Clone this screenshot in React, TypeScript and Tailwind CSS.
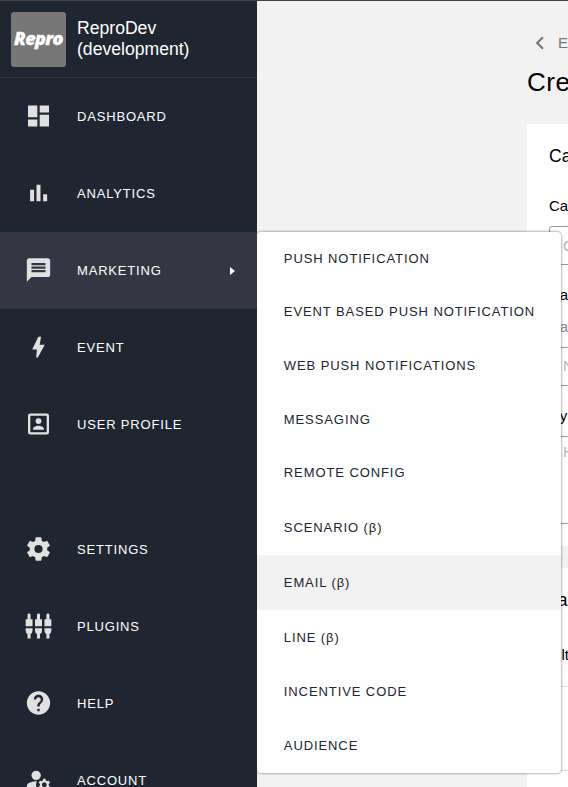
import type { ReactNode } from 'react';
import { MdChevronLeft, MdDashboard, MdHelp, MdManageAccounts, MdMessage } from 'react-icons/md';

type IconProps = { className?: string };
type Icon = (props: IconProps) => ReactNode;
type NavItem = { label: string; icon: Icon; active?: boolean };

function glyph(d: string): Icon {
  return ({ className }) => (
    <svg viewBox="0 0 24 24" fill="currentColor" fillRule="evenodd" className={className}>
      <path d={d} />
    </svg>
  );
}

const BarsIcon = glyph('M4.8 9.2h3.4V19H4.8zM10.3 5h3.4v14h-3.4zM16 13h3.4v6H16z');
const BoltIcon = glyph('M14.2 3.2h-2.4L6.6 14.2H10.6l-.6 6.8h1.4L17.4 10h-4.4z');
const ProfileIcon = glyph(
  'M19 3H5a2 2 0 0 0-2 2v14a2 2 0 0 0 2 2h14a2 2 0 0 0 2-2V5a2 2 0 0 0-2-2zm0 16H5V5h14zM12 7a2.5 2.5 0 1 1 0 5 2.5 2.5 0 0 1 0-5zM7.3 17v-.8c0-1.8 3.1-2.7 4.7-2.7s4.7.9 4.7 2.7v.8z',
);
const PlugsIcon = glyph(
  'M1 12.2V6.2h1.6V2.4q0-1.2 1.3-1.2t1.3 1.2v3.8h1.7v6zM9 12.2V6.2h1.7V2.4q0-1.2 1.3-1.2t1.3 1.2v3.8H15v6zM17.1 12.2V6.2h1.7V2.4q0-1.2 1.3-1.2t1.3 1.2v3.8H23v6zM1 14h5.9v1.8q0 2.2-1.7 3v4H2.6v-4q-1.6-.8-1.6-3zM9 14h6v1.8q0 2.2-1.7 3v4h-2.6v-4Q9 18 9 15.8zM17.1 14H23v1.8q0 2.2-1.6 3v4h-2.6v-4q-1.7-.8-1.7-3z',
);
const CogIcon = glyph(
  'M12,15.5A3.5,3.5 0 0,1 8.5,12A3.5,3.5 0 0,1 12,8.5A3.5,3.5 0 0,1 15.5,12A3.5,3.5 0 0,1 12,15.5M19.43,12.97C19.47,12.65 19.5,12.33 19.5,12C19.5,11.67 19.47,11.34 19.43,11L21.54,9.37C21.73,9.22 21.78,8.95 21.66,8.73L19.66,5.27C19.54,5.05 19.27,4.96 19.05,5.05L16.56,6.05C16.04,5.66 15.5,5.32 14.87,5.07L14.5,2.42C14.46,2.18 14.25,2 14,2H10C9.75,2 9.54,2.18 9.5,2.42L9.13,5.07C8.5,5.32 7.96,5.66 7.44,6.05L4.95,5.05C4.73,4.96 4.46,5.05 4.34,5.27L2.34,8.73C2.21,8.95 2.27,9.22 2.46,9.37L4.57,11C4.53,11.34 4.5,11.67 4.5,12C4.5,12.33 4.53,12.65 4.57,12.97L2.46,14.63C2.27,14.78 2.21,15.05 2.34,15.27L4.34,18.73C4.46,18.95 4.73,19.03 4.95,18.95L7.44,17.94C7.96,18.34 8.5,18.68 9.13,18.93L9.5,21.58C9.54,21.82 9.75,22 10,22H14C14.25,22 14.46,21.82 14.5,21.58L14.87,18.93C15.5,18.67 16.04,18.34 16.56,17.94L19.05,18.95C19.27,19.03 19.54,18.95 19.66,18.73L21.66,15.27C21.78,15.05 21.73,14.78 21.54,14.63L19.43,12.97Z',
);

const mainNav: NavItem[] = [
  { label: 'DASHBOARD', icon: MdDashboard },
  { label: 'ANALYTICS', icon: BarsIcon },
  { label: 'MARKETING', icon: MdMessage, active: true },
  { label: 'EVENT', icon: BoltIcon },
  { label: 'USER PROFILE', icon: ProfileIcon },
];

const footNav: NavItem[] = [
  { label: 'SETTINGS', icon: CogIcon },
  { label: 'PLUGINS', icon: PlugsIcon },
  { label: 'HELP', icon: MdHelp },
  { label: 'ACCOUNT', icon: MdManageAccounts },
];

const submenu = [
  { label: 'PUSH NOTIFICATION' },
  { label: 'EVENT BASED PUSH NOTIFICATION' },
  { label: 'WEB PUSH NOTIFICATIONS' },
  { label: 'MESSAGING' },
  { label: 'REMOTE CONFIG' },
  { label: 'SCENARIO (β)', tall: true },
  { label: 'EMAIL (β)', tall: true, hover: true },
  { label: 'LINE (β)', tall: true },
  { label: 'INCENTIVE CODE' },
  { label: 'AUDIENCE' },
];

function NavRow({ label, icon: ItemIcon, active }: NavItem) {
  return (
    <li className={`flex h-[77px] shrink-0 items-center pl-6 pr-[22px] ${active ? 'bg-[#343743]' : ''}`}>
      <span className="mb-[2px] flex w-[29px] shrink-0 justify-center">
        <ItemIcon className="h-7 w-[29px] text-[#e1e1e1]" />
      </span>
      <span className="ml-6 flex-1 text-[13px] leading-5 tracking-[0.82px] text-white">{label}</span>
      {active && <span className="h-0 w-0 border-y-4 border-l-[5px] border-y-transparent border-l-white" />}
    </li>
  );
}

function Sidebar() {
  return (
    <aside className="flex w-[257px] shrink-0 flex-col bg-[#202532]">
      <div className="flex h-[77px] shrink-0 items-center border-b border-[#343743] pl-[11px]">
        <div className="flex size-[55px] items-center justify-center rounded-[3px] bg-[#777777] pb-[3px] font-['Open_Sans'] text-[18px] leading-none font-extrabold tracking-[-0.6px] text-white italic">
          <span className="[-webkit-text-stroke:0.3px_white]">Repro</span>
        </div>
        <div className="ml-[11px] text-[17.6px] leading-[21px] text-white">
          ReproDev
          <br />
          (development)
        </div>
      </div>
      <ul className="flex flex-col">
        {mainNav.map((n) => (
          <NavRow key={n.label} {...n} />
        ))}
      </ul>
      <ul className="mt-12 flex flex-col">
        {footNav.map((n) => (
          <NavRow key={n.label} {...n} />
        ))}
      </ul>
    </aside>
  );
}

function Submenu() {
  return (
    <ul className="absolute top-[231px] left-[257px] w-[304px] overflow-hidden rounded-[4px] bg-[#fefefe] shadow-[0_0_2px_1px_rgba(0,0,0,0.28)] [clip-path:inset(-3px_-3px_-3px_0)]">
      {submenu.map((s) => (
        <li
          key={s.label}
          className={`flex items-center pl-[26.8px] text-[13px] leading-5 tracking-[0.91px] whitespace-nowrap text-[#202532] ${s.tall ? 'h-[55.2px] pt-px' : 'h-[53.6px]'} ${s.hover ? 'bg-[#f2f2f2]' : ''}`}
        >
          {s.label}
        </li>
      ))}
    </ul>
  );
}

function Field({ className, children }: { className: string; children: ReactNode }) {
  return (
    <div className={`rounded-[3px] border border-[#999] pl-[13px] text-[15px] text-[#b5b5b5] ${className}`}>
      {children}
    </div>
  );
}

function Content() {
  return (
    <main className="flex min-w-0 flex-1 flex-col overflow-hidden bg-[#f2f2f2] pl-[270px] whitespace-nowrap text-black">
      <div className="mt-[30px] flex h-6 items-center text-[15px] text-[#777]">
        <MdChevronLeft className="size-[26px] shrink-0" />
        <span className="ml-[5px]">Email</span>
      </div>
      <h1 className="mt-[8px] text-[26px] leading-[38px] tracking-[0.5px]">Create</h1>
      <section className="mt-[23px] flex flex-1 flex-col bg-white pl-[22px]">
        <h2 className="mt-5 text-[17.5px] leading-6">Campaign</h2>
        <div className="mt-[28px] text-[15px] leading-5">Campaign</div>
        <Field className="mt-[10px] h-[39px] w-[400px] leading-[37px]">Campaign</Field>
        <div className="mt-5 text-[15px] leading-5">Category</div>
        <div className="mt-[12px] text-[15px] leading-5 text-[#888]">Category</div>
        <Field className="mt-[10px] h-[39px] w-[400px] leading-[35px]">None</Field>
        <div className="mt-5 text-[15px] leading-5">Dynamic</div>
        <Field className="mt-[10px] h-[88px] w-[400px] leading-[30px]">HTML</Field>
        <div className="mt-[22px] -ml-[22px] h-[22px] bg-[#f2f2f2]" />
        <h2 className="mt-5 text-[17.5px] leading-6">Target</h2>
        <div className="mt-[33px] text-[15px] leading-5">Filter</div>
        <div className="mt-[21px] h-[85px] border-y border-[#ddd]" />
      </section>
    </main>
  );
}

export default function App() {
  return (
    <div className="relative flex h-[787px] w-[568px] overflow-hidden border-t border-[#444] bg-[#f2f2f2] font-['Liberation_Sans',Arial,sans-serif]">
      <Sidebar />
      <Content />
      <Submenu />
    </div>
  );
}
